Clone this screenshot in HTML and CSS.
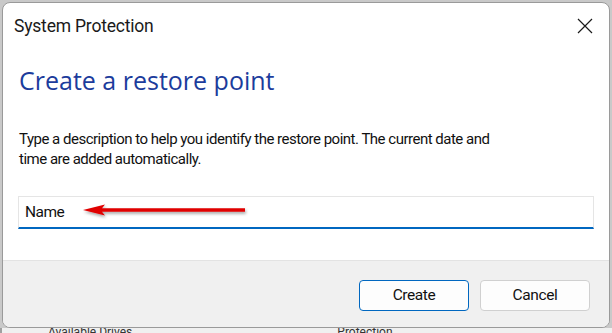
FILE: index.html
```html
<!DOCTYPE html>
<html lang="en">
<head>
    <meta charset="UTF-8">
    <title>System Protection</title>
    <link rel="stylesheet" href="styles.css">
</head>
<body>
  <div class="dialog">
    <div class="title-bar">
      <span class="title">System Protection</span>
      <span class="close">
        <svg width="16" height="16" viewBox="0 0 16 16">
          <path d="M1 1 L15 15 M15 1 L1 15" stroke="#1a1a1a" stroke-width="1.2" fill="none"/>
        </svg>
      </span>
    </div>

    <div class="content">
      <h1>Create a restore point</h1>
      <p>Type a description to help you identify the restore point. The current date and<br>time are added automatically.</p>

      <div class="name-field">
        <span class="name-text">Name</span>
        <svg class="arrow" width="170" height="18" viewBox="0 0 170 18">
          <defs>
            <filter id="shadow" x="-10%" y="-100%" width="120%" height="300%">
              <feDropShadow dx="1" dy="2" stdDeviation="1.5" flood-color="#000" flood-opacity="0.35"/>
            </filter>
          </defs>
          <g filter="url(#shadow)">
            <polygon points="2,8 24,2.5 21,6.2 164,6.2 164,9.8 21,9.8 24,13.5" fill="#e00000"/>
          </g>
        </svg>
      </div>
    </div>

    <div class="footer">
      <button class="btn btn-primary">Create</button>
      <button class="btn">Cancel</button>
    </div>
  </div>
  <div class="behind">
    <span class="behind-text">Available Drives</span>
    <span class="behind-text right">Protection</span>
  </div>
</body>
</html>
```

FILE: styles.css
```css
* {
    margin: 0;
    padding: 0;
    box-sizing: border-box;
}

body {
    width: 612px;
    height: 333px;
    overflow: hidden;
    background: #c9c9c9;
    font-family: 'Roboto', 'Open Sans', sans-serif;
    padding: 2px 2px 0 2px;
}

.dialog {
    width: 608px;
    height: 326px;
    background: white;
    border: 1px solid #9a9a9a;
    border-radius: 8px;
    overflow: hidden;
    display: flex;
    flex-direction: column;
    position: relative;
    z-index: 1;
}

.title-bar {
    height: 46px;
    flex-shrink: 0;
    display: flex;
    align-items: center;
    justify-content: space-between;
    padding: 0 15px 0 11px;
}

.title {
    font-size: 17.5px;
    color: #1a1a1a;
    margin-top: -1px;
    letter-spacing: -0.2px;
}

.close {
    display: flex;
    width: 18px;
    height: 18px;
    align-items: center;
    justify-content: center;
    margin-top: -1px;
}

.content {
    flex: 1;
    padding: 16px 15px 0 15px;
}

.content h1 {
    font-family: 'Open Sans', sans-serif;
    font-size: 25px;
    line-height: 30px;
    font-weight: normal;
    color: #1c3c9c;
    margin-left: 1px;
}

.content p {
    font-size: 15px;
    line-height: 20px;
    letter-spacing: -0.5px;
    color: #111;
    margin-top: 34px;
    margin-left: 1px;
}

.name-field {
    margin-top: 27px;
    width: 576px;
    height: 33px;
    border: 1px solid #e5e5e5;
    border-bottom: 2px solid #0067c0;
    display: flex;
    align-items: center;
    padding-left: 6px;
    position: relative;
}

.name-text {
    font-size: 15.5px;
    letter-spacing: -0.5px;
    color: #111;
}

.arrow {
    position: absolute;
    left: 62px;
    top: 5px;
}

.footer {
    height: 67px;
    flex-shrink: 0;
    background: #f0f0f0;
    border-top: 1px solid #e3e3e3;
    display: flex;
    justify-content: flex-end;
    align-items: center;
    gap: 11px;
    padding: 2px 19px 0 0;
}

.btn {
    width: 110px;
    height: 31px;
    background: #fdfdfd;
    border: 1px solid #d0d0d0;
    border-radius: 4px;
    font-family: 'Roboto', 'Open Sans', sans-serif;
    font-size: 15.5px;
    letter-spacing: -0.4px;
    color: #111;
}

.btn-primary {
    border-color: #0067c0;
}

.behind {
    position: absolute;
    left: 0;
    top: 328px;
    width: 612px;
    height: 10px;
    background: #f0f0f0;
    border-left: 2px solid #a0a0a0;
    display: flex;
    padding-left: 46px;
}

.behind-text {
    font-size: 12px;
    color: #333;
    margin-top: -3px;
}

.behind-text.right {
    margin-left: 205px;
}
```
